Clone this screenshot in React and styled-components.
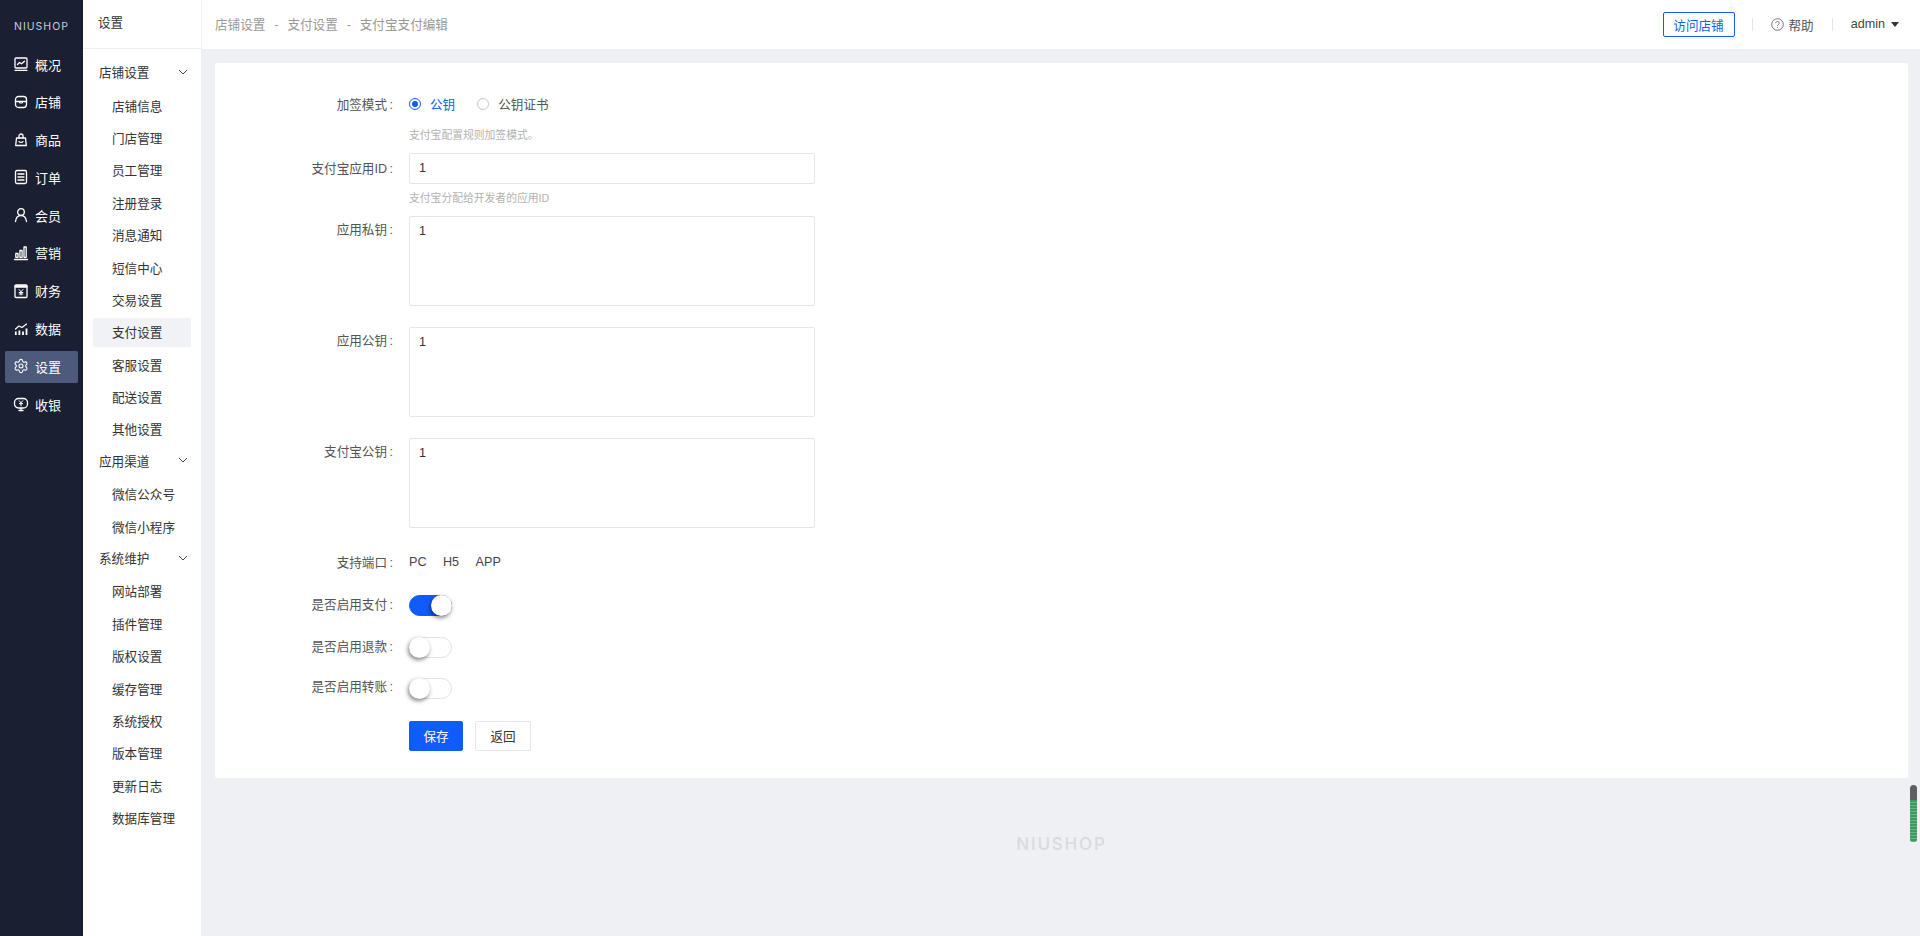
import React from 'react'
import styled, { createGlobalStyle } from 'styled-components'
import { Settings } from 'lucide-react'

const GlobalStyle = createGlobalStyle`
  html, body { margin: 0; padding: 0; height: 100%; overflow: hidden; }
  body {
    font-family: "Liberation Sans", "Noto Sans CJK SC", sans-serif;
    font-size: 12.6px;
    color: #333;
    background: #eff0f4;
  }
  * { box-sizing: border-box; }
`

const Icon = ({ children }) => (
  <svg width="16" height="16" viewBox="0 0 16 16" fill="none" stroke="currentColor" strokeWidth="1.3" strokeLinecap="round" strokeLinejoin="round">
    {children}
  </svg>
)

const icons = {
  overview: <Icon><rect x="2" y="2" width="12" height="10" rx="1" /><path d="M4.500 8.500l2-2 2 1.300 3-2.600" /><path d="M2 14.300h12" /></Icon>,
  shop: <Icon><rect x="2.500" y="2.500" width="11" height="11" rx="3" /><path d="M2.500 7.500h11" /><path d="M6.500 7.500v1.500h3V7.500" strokeWidth="1" /></Icon>,
  goods: <Icon><path d="M3.500 6h9l.8 7.500H2.700z" /><path d="M6 6V4a2 2 0 0 1 4 0v2" /><path d="M6 9.500c.8 1.200 3.200 1.200 4 0" /></Icon>,
  order: <Icon><rect x="2.500" y="1.500" width="11" height="13" rx="1.500" /><path d="M5 5h6M5 8h6M5 11h6" /></Icon>,
  member: <Icon><circle cx="8" cy="5" r="3.300" /><path d="M2.500 14.500c.4-3.400 2.600-6 5.500-6s5.100 2.600 5.500 6" /></Icon>,
  marketing: <Icon><path d="M1.500 14.500h13" /><path d="M2.800 8.500h2.200v3.800H2.800zM6.900 5.500h2.200v6.800H6.900zM11 2h2.200v10.300H11z" /></Icon>,
  finance: (
    <Icon>
      <rect x="2" y="2" width="12" height="12.500" rx="1" />
      <path d="M2.500 3.500h11" strokeWidth="2.400" />
      <path d="M6 6.500l2 2.200 2-2.200M8 8.700V12M6.200 9.500h3.600M6.200 11h3.600" strokeWidth="1" />
    </Icon>
  ),
  data: (
    <Icon>
      <path d="M2.800 10.500v3.500M6.400 9.500v4.500M10 10.500v3.500M13.500 7.500v6.500" strokeWidth="1.800" strokeLinecap="butt" />
      <path d="M2.500 8l3.500-3 3 1.500 4.500-3.500" strokeWidth="1.200" />
    </Icon>
  ),
  settings: <Settings size={16} strokeWidth={1.6} />,
  cashier: (
    <Icon>
      <rect x="1.500" y="2.500" width="13" height="9.500" rx="4" />
      <path d="M6 14.500h4M8 12v2.500" />
      <path d="M6.300 4.800L8 6.800l1.700-2M8 6.800v3M6.400 7.600h3.200" strokeWidth="1" />
    </Icon>
  ),
}

const mainMenu = [
  ['overview', '概况'],
  ['shop', '店铺'],
  ['goods', '商品'],
  ['order', '订单'],
  ['member', '会员'],
  ['marketing', '营销'],
  ['finance', '财务'],
  ['data', '数据'],
  ['settings', '设置'],
  ['cashier', '收银'],
]

const subMenu = [
  { title: '店铺设置', items: ['店铺信息', '门店管理', '员工管理', '注册登录', '消息通知', '短信中心', '交易设置', '支付设置', '客服设置', '配送设置', '其他设置'] },
  { title: '应用渠道', items: ['微信公众号', '微信小程序'] },
  { title: '系统维护', items: ['网站部署', '插件管理', '版权设置', '缓存管理', '系统授权', '版本管理', '更新日志', '数据库管理'] },
]

const Page = styled.div`
  display: flex;
  height: 100vh;
  position: relative;
`

const Sidebar = styled.aside`
  width: 83px;
  flex-shrink: 0;
  background: #1a2032;
  color: #fff;
`

const Logo = styled.div`
  height: 49px;
  display: flex;
  align-items: center;
  justify-content: center;
  padding-top: 3px;
  font-family: Inter, "Liberation Sans", sans-serif;
  font-size: 10.5px;
  letter-spacing: 1px;
  color: #c9ccd3;
`

const MainItem = styled.div`
  height: 32px;
  margin: 0 5px 5.8px;
  padding: 0 0 2px 8px;
  display: flex;
  align-items: center;
  gap: 6px;
  font-size: 13px;
  border-radius: 2px;
  background: ${p => (p.$active ? '#4d5a7c' : 'transparent')};
`

const SubSidebar = styled.aside`
  width: 119px;
  flex-shrink: 0;
  background: #fff;
  border-right: 1px solid #eff0f4;
`

const SubTitle = styled.div`
  height: 49px;
  padding-left: 15px;
  line-height: 47px;
  border-bottom: 1px solid #eff0f4;
`

const SubList = styled.div`
  padding: 8px 10px 0;
`

const GroupTitle = styled.div`
  height: 32.4px;
  padding: 0 3px 3px 6px;
  display: flex;
  align-items: center;
  justify-content: space-between;
`

const SubItem = styled.div`
  height: ${p => (p.$active ? '29px' : '32.4px')};
  margin: ${p => (p.$active ? '1.7px 0' : '0')};
  padding: 0 0 1px 19px;
  display: flex;
  align-items: center;
  border-radius: 2px;
  background: ${p => (p.$active ? '#f1f2f5' : 'transparent')};
`

const Main = styled.div`
  flex: 1;
  display: flex;
  flex-direction: column;
  min-width: 0;
`

const Header = styled.header`
  height: 49px;
  background: #fff;
  padding: 0 21px 0 13px;
  display: flex;
  align-items: center;
  justify-content: space-between;
`

const Breadcrumb = styled.div`
  display: flex;
  align-items: baseline;
  padding-bottom: 2px;
  color: #999;
`

const Sep = styled.span`
  width: 22px;
  text-align: center;
`

const HeaderRight = styled.div`
  display: flex;
  align-items: center;
`

const VisitButton = styled.div`
  width: 72px;
  height: 25px;
  margin-right: -1px;
  border: 1px solid #105cfb;
  border-radius: 2px;
  color: #105cfb;
  display: flex;
  align-items: center;
  justify-content: center;
`

const Divider = styled.span`
  width: 1px;
  height: 13px;
  background: #e4e5e8;
  margin: 0 18px;
`

const Help = styled.div`
  display: flex;
  align-items: center;
  gap: 5px;
  color: #555;
`

const Admin = styled.div`
  display: flex;
  align-items: center;
  gap: 6px;
  padding-bottom: 1px;
  color: #444;
`

const Caret = styled.span`
  width: 0;
  height: 0;
  border-left: 4.5px solid transparent;
  border-right: 4.5px solid transparent;
  border-top: 5px solid #333;
`

const Content = styled.main`
  flex: 1;
  padding: 14px 12px 0 13px;
`

const Card = styled.section`
  height: 715px;
  background: #fff;
  border-radius: 2px;
  padding: 27px 0 0;
`

const Row = styled.div`
  display: flex;
  align-items: ${p => (p.$top ? 'flex-start' : 'center')};
  height: ${p => p.$h || 31}px;
  margin-bottom: ${p => p.$mb || 0}px;
`

const LabelBox = styled.label`
  width: 178px;
  margin-right: 16px;
  padding-bottom: ${p => p.$lift || 0}px;
  text-align: right;
  color: #555;
  flex-shrink: 0;
  line-height: ${p => (p.$top ? '29px' : 'normal')};
`

const Colon = styled.span`
  margin-left: 2.5px;
`

const Label = ({ children, ...rest }) => (
  <LabelBox {...rest}>{children}<Colon>:</Colon></LabelBox>
)

const Hint = styled.div`
  margin: 5px 0 9px 194px;
  height: 18px;
  line-height: 18px;
  font-size: 10.8px;
  color: #b2b2b2;
`

const TextInput = styled.div`
  width: 406px;
  height: 31px;
  border: 1px solid #e6e6e6;
  border-radius: 2px;
  padding: 0 9px;
  line-height: 29px;
  color: #333;
`

const TextArea = styled.div`
  width: 406px;
  height: 90px;
  border: 1px solid #e6e6e6;
  border-radius: 2px;
  padding: 0 9px;
  line-height: 29px;
  color: #333;
`

const RadioGroup = styled.div`
  display: flex;
  align-items: center;
  padding-bottom: 4px;
`

const Radio = styled.span`
  width: 12px;
  height: 12px;
  border-radius: 50%;
  border: 1px solid ${p => (p.$checked ? '#105cfb' : '#c9c9c9')};
  display: flex;
  align-items: center;
  justify-content: center;
  margin-right: 9px;
  &::after {
    content: '';
    width: 6px;
    height: 6px;
    border-radius: 50%;
    background: ${p => (p.$checked ? '#105cfb' : 'transparent')};
  }
`

const RadioText = styled.span`
  color: ${p => (p.$checked ? '#105cfb' : '#555')};
  margin-right: 22px;
`

const Ports = styled.div`
  display: flex;
  gap: 16.500px;
  color: #444;
`

const Switch = styled.span`
  width: 43px;
  height: 21px;
  border-radius: 11px;
  border: 1px solid ${p => (p.$on ? '#105cfb' : '#e2e2e2')};
  background: ${p => (p.$on ? '#105cfb' : '#fff')};
  position: relative;
  display: block;
  &::after {
    content: '';
    position: absolute;
    top: -1px;
    left: ${p => (p.$on ? '21px' : '-1px')};
    width: 21px;
    height: 21px;
    border-radius: 50%;
    background: #fff;
    box-shadow: -1px 2px 4px rgba(0, 0, 0, 0.5);
  }
`

const Actions = styled.div`
  display: flex;
  gap: 12px;
  margin: 22px 0 0 194px;
`

const Button = styled.div`
  width: ${p => (p.$primary ? '54px' : '56px')};
  height: 30px;
  padding-bottom: 2px;
  border-radius: 2px;
  border: 1px solid ${p => (p.$primary ? '#105cfb' : '#e6e6e6')};
  background: ${p => (p.$primary ? '#105cfb' : '#fff')};
  color: ${p => (p.$primary ? '#fff' : '#333')};
  display: flex;
  align-items: center;
  justify-content: center;
`

const FooterLogo = styled.div`
  height: 132px;
  padding-bottom: 1px;
  display: flex;
  align-items: center;
  justify-content: center;
  font-family: Inter, "Liberation Sans", sans-serif;
  font-size: 17px;
  font-weight: 500;
  letter-spacing: 1.8px;
  color: #d9dade;
`

const ScrollWidget = styled.div`
  position: absolute;
  left: 1910px;
  top: 785px;
  width: 7px;
  height: 57px;
  border-radius: 4px;
  overflow: hidden;
  background: #5b5f63;
  &::after {
    content: '';
    position: absolute;
    left: 0;
    right: 0;
    top: 15px;
    bottom: 0;
    background: repeating-linear-gradient(#3f9a5c 0 2px, #6db585 2px 3px);
  }
`

const App = () => {
  return (
    <Page>
      <GlobalStyle />
      <Sidebar>
        <Logo>NIUSHOP</Logo>
        {mainMenu.map(([icon, text]) => (
          <MainItem key={text} $active={text === '设置'}>
            {icons[icon]}
            <span>{text}</span>
          </MainItem>
        ))}
      </Sidebar>
      <SubSidebar>
        <SubTitle>设置</SubTitle>
        <SubList>
          {subMenu.map(group => (
            <div key={group.title}>
              <GroupTitle>
                {group.title}
                <svg width="10" height="6" viewBox="0 0 10 6" fill="none" stroke="#444" strokeWidth="1">
                  <path d="M1 1l4 4 4-4" />
                </svg>
              </GroupTitle>
              {group.items.map(item => (
                <SubItem key={item} $active={item === '支付设置'}>{item}</SubItem>
              ))}
            </div>
          ))}
        </SubList>
      </SubSidebar>
      <Main>
        <Header>
          <Breadcrumb>
            <span>店铺设置</span>
            <Sep>-</Sep>
            <span>支付设置</span>
            <Sep>-</Sep>
            <span>支付宝支付编辑</span>
          </Breadcrumb>
          <HeaderRight>
            <VisitButton>访问店铺</VisitButton>
            <Divider />
            <Help>
              <svg width="13" height="13" viewBox="0 0 13 13" fill="none" stroke="#666" strokeWidth="0.9">
                <circle cx="6.500" cy="6.500" r="5.800" />
                <path d="M4.800 5.200a1.700 1.700 0 1 1 2.600 1.400c-.6.400-.9.700-.9 1.400" />
                <path d="M6.500 9.200v.8" />
              </svg>
              帮助
            </Help>
            <Divider />
            <Admin>admin<Caret /></Admin>
          </HeaderRight>
        </Header>
        <Content>
          <Card>
            <Row>
              <Label $lift={4}>加签模式</Label>
              <RadioGroup>
                <Radio $checked />
                <RadioText $checked>公钥</RadioText>
                <Radio />
                <RadioText>公钥证书</RadioText>
              </RadioGroup>
            </Row>
            <Hint>支付宝配置规则加签模式。</Hint>
            <Row>
              <Label $lift={2}>支付宝应用ID</Label>
              <TextInput>1</TextInput>
            </Row>
            <Hint>支付宝分配给开发者的应用ID</Hint>
            <Row $top $h={90} $mb={21}>
              <Label $top>应用私钥</Label>
              <TextArea>1</TextArea>
            </Row>
            <Row $top $h={90} $mb={21}>
              <Label $top>应用公钥</Label>
              <TextArea>1</TextArea>
            </Row>
            <Row $top $h={90} $mb={18}>
              <Label $top>支付宝公钥</Label>
              <TextArea>1</TextArea>
            </Row>
            <Row $mb={18}>
              <Label>支持端口</Label>
              <Ports><span>PC</span><span>H5</span><span>APP</span></Ports>
            </Row>
            <Row $h={21} $mb={21}>
              <Label $lift={5}>是否启用支付</Label>
              <Switch $on />
            </Row>
            <Row $h={21} $mb={20}>
              <Label $lift={5}>是否启用退款</Label>
              <Switch />
            </Row>
            <Row $h={21}>
              <Label $lift={6}>是否启用转账</Label>
              <Switch />
            </Row>
            <Actions>
              <Button $primary>保存</Button>
              <Button>返回</Button>
            </Actions>
          </Card>
          <FooterLogo>NIUSHOP</FooterLogo>
        </Content>
      </Main>
      <ScrollWidget />
    </Page>
  )
}

export default App
